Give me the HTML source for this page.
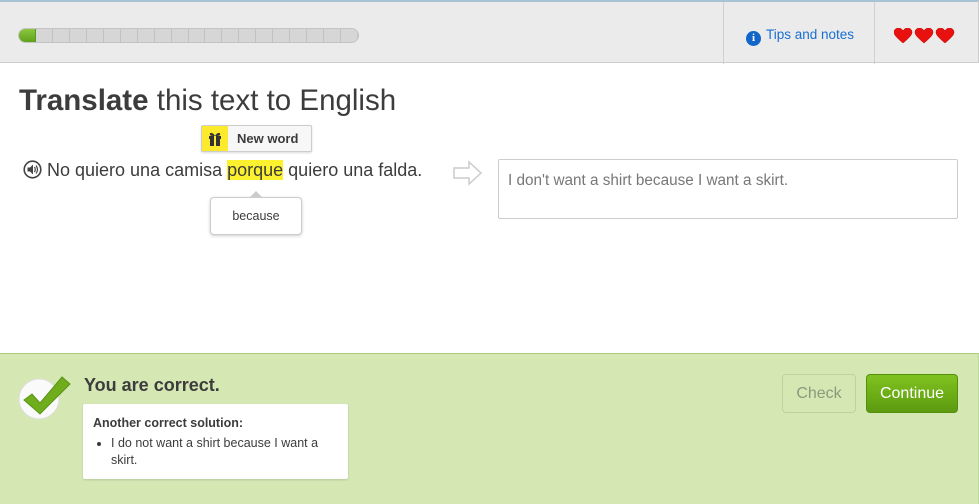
<!DOCTYPE html>
<html><head><style>
*{margin:0;padding:0;box-sizing:border-box}
body{width:979px;height:504px;overflow:hidden;font-family:"Liberation Sans",Arial,sans-serif;background:#fff;position:relative;color:#3c3c3c}
.top{position:absolute;left:0;top:0;width:979px;height:63px;background:#ebebeb;border-top:2px solid #a8c4d4;border-bottom:1px solid #ccc;border-right:1px solid #ccc}
.pb{position:absolute;left:18px;top:26px;width:341px;height:15px;border-radius:8px;background:#d6d6d6;border:1px solid #c4c4c4;overflow:hidden;display:flex}
.pb i{display:block;width:17px;height:100%;border-right:1px solid #c2c2c2}
.pb i.g{background:linear-gradient(#8cc63f,#5fa11c);border-right:1px solid #5a9a1a}
.div{position:absolute;top:0;width:1px;height:62px;background:#d0d0d0}
.tips{position:absolute;left:746px;top:25px;font-size:13.5px;color:#1a6fd1}
.tips b{display:inline-block;width:15px;height:15px;border-radius:50%;background:#1266c9;color:#fff;font-size:11px;text-align:center;line-height:15px;vertical-align:-2px;margin-right:5px;font-family:"Liberation Serif",serif}
.hearts{position:absolute;left:894px;top:26px}
h1{position:absolute;left:19px;top:84px;font-size:29.5px;font-weight:normal;color:#3c3c3c}
.nw{position:absolute;left:201px;top:125px;width:111px;height:27px;border:1px solid #ccc;border-radius:2px;background:#f7f7f7;box-shadow:0 1px 2px rgba(0,0,0,.15);font-size:13px;font-weight:bold;line-height:25px}
.nw .g{position:absolute;left:0;top:0;width:26px;height:25px;background:#fde92e}
.sent{position:absolute;left:23px;top:160px;font-size:18px;color:#3c3c3c}
.sent .hl{background:#fbf12e}
.tip{position:absolute;left:210px;top:197px;width:92px;height:38px;border:1px solid #ccc;border-radius:4px;background:#fff;box-shadow:0 1px 3px rgba(0,0,0,.2);font-size:12.5px;text-align:center;line-height:36px}
.tip:before{content:"";position:absolute;left:39px;top:-7px;border:6px solid transparent;border-bottom-color:#ccc;border-top:0}
.arrow{position:absolute;left:453px;top:160px}
.inp{position:absolute;left:498px;top:159px;width:460px;height:60px;border:1px solid #ccc;border-radius:2px;padding:12px 9px;font-size:15.3px;color:#777}
.foot{position:absolute;left:0;top:353px;width:979px;height:151px;background:#d5e8b4;border-top:1px solid #a9cc7c;border-right:1px solid #c0d8a0}
.ck{position:absolute;left:16px;top:374px}
.yc{position:absolute;left:84px;top:375px;font-size:18px;font-weight:bold;color:#3c3c3c}
.box{position:absolute;left:83px;top:404px;width:265px;height:75px;background:#fff;border-radius:2px;box-shadow:0 1px 2px rgba(0,0,0,.15);padding:12px 10px;font-size:12.5px}
.box ul{margin-left:18px;margin-top:5px;line-height:17px}
.btn{position:absolute;top:374px;height:39px;border-radius:4px;font-size:16px;text-align:center;line-height:37px}
.chk{left:782px;width:74px;border:1px solid #bcd39b;color:#8a9a7a}
.con{left:866px;width:92px;background:linear-gradient(#7fc31f,#5c9a10);border:1px solid #55900d;color:#fff}
</style></head><body>
<div class="top">
<div class="pb"><i class="g"></i><i></i><i></i><i></i><i></i><i></i><i></i><i></i><i></i><i></i><i></i><i></i><i></i><i></i><i></i><i></i><i></i><i></i><i></i><i></i></div>
<div class="div" style="left:723px"></div><div class="div" style="left:874px"></div>
<div class="tips"><b>i</b>Tips and notes</div>
<svg class="hearts" width="62" height="16" viewBox="0 0 62 16"><g fill="#e8110f" stroke="#b00" stroke-width=".5"><path id="h" d="M9 15C3 10 0 7 0 4.2 0 1.8 2 0 4.4 0 6.5 0 8 1.2 9 2.8 10 1.2 11.5 0 13.6 0 16 0 18 1.8 18 4.2 18 7 15 10 9 15z"/><use href="#h" x="21"/><use href="#h" x="42"/></g></svg>
</div>
<h1><b>Translate</b> this text to English</h1>
<div class="nw"><span class="g"><svg width="26" height="25" viewBox="0 0 26 25"><g fill="#333"><rect x="7" y="10" width="12" height="3"/><rect x="8" y="13" width="10" height="7"/><path d="M13 10c-2-4-6-4-5-1 1 1 3 1 5 1zM13 10c2-4 6-4 5-1-1 1-3 1-5 1z"/></g><rect x="12" y="10" width="2" height="10" fill="#fde92e"/></svg></span><span style="position:absolute;left:35px">New word</span></div>
<div class="sent"><svg width="19" height="19" viewBox="0 0 19 19" style="vertical-align:-3px;margin-right:5px"><circle cx="9.5" cy="9.5" r="8.3" fill="#fff" stroke="#444" stroke-width="1.6"/><path d="M4.5 7.5h2.5l3-3v10l-3-3H4.5z" fill="#444"/><path d="M11.5 7q1.5 2.5 0 5M13 5.5q3 4 0 8" fill="none" stroke="#444" stroke-width="1.2"/></svg>No quiero una camisa <span class="hl">porque</span> quiero una falda.</div>
<div class="tip">because</div>
<svg class="arrow" width="30" height="26" viewBox="0 0 30 26"><path d="M1 8h15V2l12 11-12 11v-6H1z" fill="#fff" stroke="#ccc" stroke-width="1.5"/></svg>
<div class="inp">I don't want a shirt because I want a skirt.</div>
<div class="foot"></div>
<svg class="ck" width="58" height="48" viewBox="0 0 58 48"><circle cx="23" cy="25" r="20" fill="#fafafa" stroke="#ddd"/><path d="M8 26l8-6 8 9L46 3l8 7-30 30z" fill="#6fad1d" stroke="#5a9416"/></svg>
<div class="yc">You are correct.</div>
<div class="box"><b>Another correct solution:</b><ul><li>I do not want a shirt because I want a skirt.</li></ul></div>
<div class="btn chk">Check</div>
<div class="btn con">Continue</div>
</body></html>
